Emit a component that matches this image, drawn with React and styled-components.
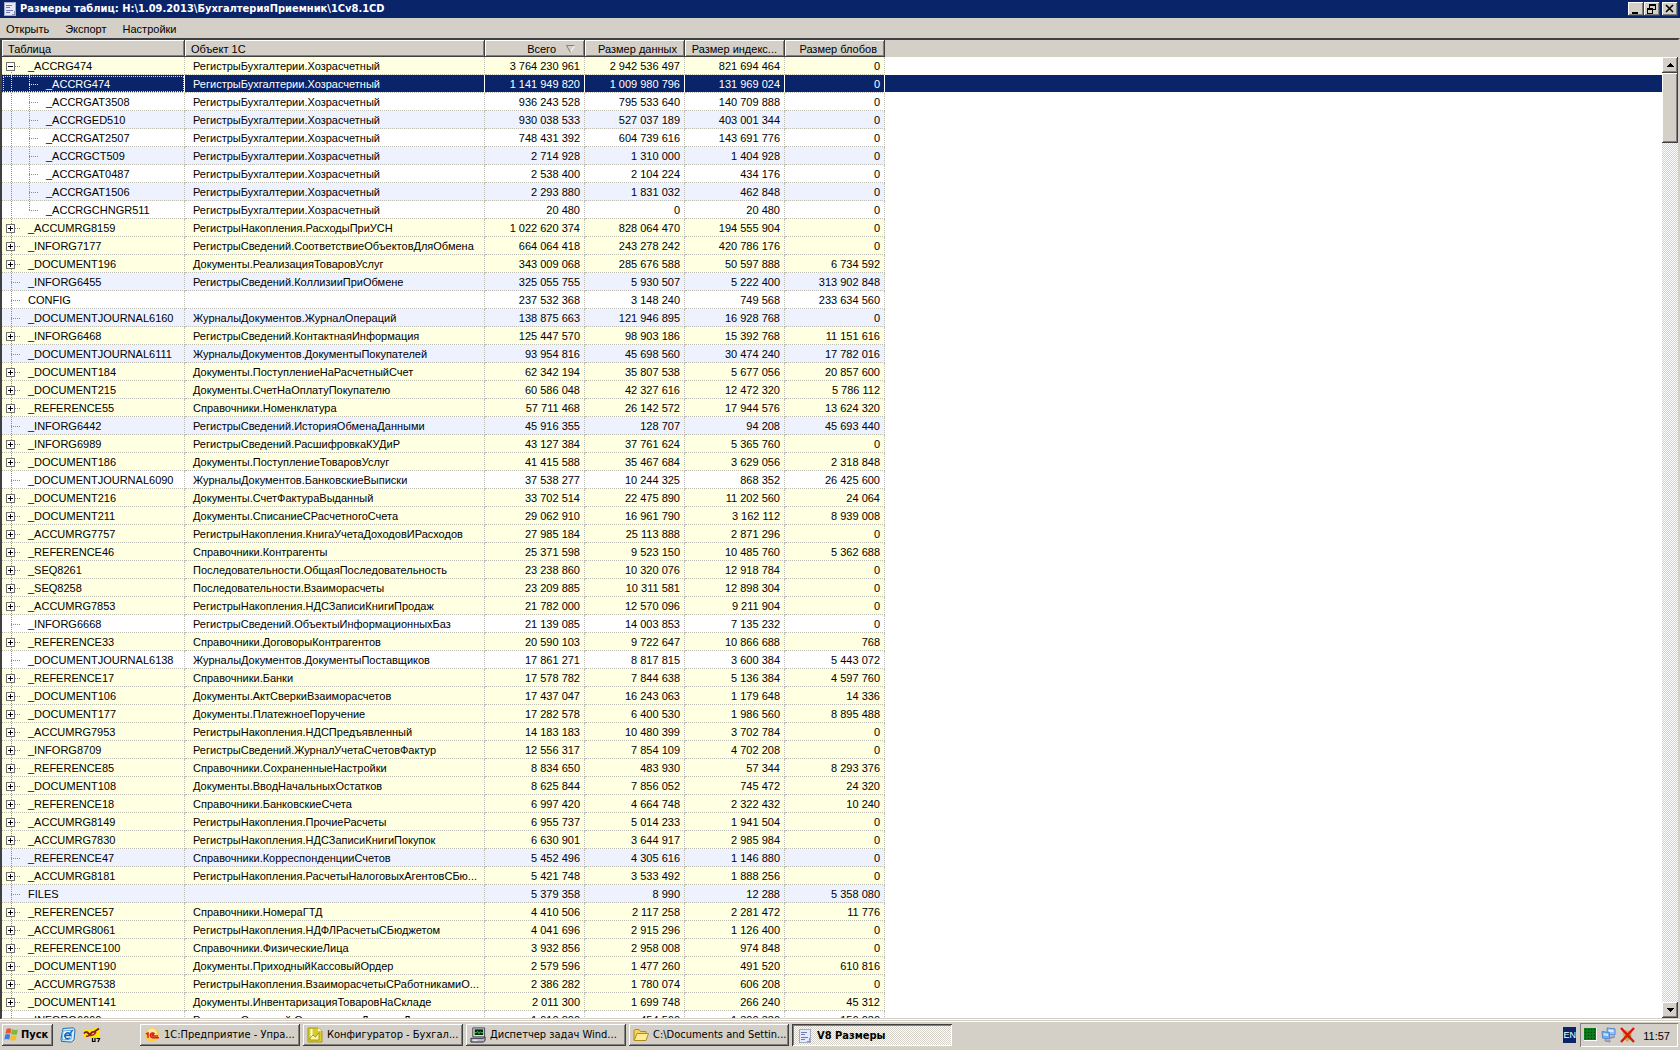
import React, { useState } from "react";
import styled, { createGlobalStyle, css } from "styled-components";

const face = "#d4d0c8";
const shade = "#808080";
const dark = "#404040";
const navy = "#0a246a";
const sans = '"Liberation Sans", Arial, sans-serif';
const tahoma = '"DejaVu Sans Condensed", "DejaVu Sans", sans-serif';

const Global = createGlobalStyle`
  * { box-sizing: border-box; }
  html, body { margin: 0; height: 100%; overflow: hidden; }
  body { background: ${face}; font: 11px/16px ${sans}; color: #000; }
  button { font: inherit; color: inherit; margin: 0; padding: 0; border: 0; background: none; }
  svg { display: block; flex: none; }
`;

const raised = css`
  background: ${face};
  box-shadow: inset -1px -1px ${dark}, inset 1px 1px #fff, inset -2px -2px ${shade};
`;

const dither = css`
  background: conic-gradient(#fff 25%, ${face} 0 50%, #fff 0 75%, ${face} 0) 0 0 / 2px 2px;
`;

const Desktop = styled.div`
  height: 100vh;
  display: flex;
  flex-direction: column;
`;

const Window = styled.main`
  flex: 1;
  min-height: 0;
  display: flex;
  flex-direction: column;
`;

const TitleBar = styled.header`
  display: flex;
  align-items: center;
  height: 18px;
  flex: none;
  padding: 0 2px 0 4px;
  gap: 4px;
  background: ${navy};
  color: #fff;
`;

const Title = styled.h1`
  flex: 1;
  margin: 0;
  font: bold 11px/18px ${tahoma};
  white-space: nowrap;
`;

const Controls = styled.div`
  display: flex;
`;

const ControlButton = styled.button`
  ${raised}
  width: 16px;
  height: 14px;
  margin-left: ${(p) => (p.$apart ? "2px" : "0")};
`;

const MenuBar = styled.nav`
  display: flex;
  flex: none;
  height: 20px;
  gap: 16px;
  padding: 0 6px;
`;

const MenuItem = styled.button`
  line-height: 22px;
`;

const ListFrame = styled.section`
  flex: 1;
  min-height: 0;
  display: flex;
  background: #fff;
  border: 2px solid ${face};
  border-top-color: ${dark};
  border-left-color: ${dark};
`;

const ListView = styled.div`
  flex: 1;
  min-width: 0;
  overflow: hidden;
`;

const Table = styled.table`
  width: 100%;
  table-layout: fixed;
  border-collapse: separate;
  border-spacing: 0;
`;

const Col = styled.col`
  width: ${(p) => p.$w};
`;

const HeadCell = styled.th`
  ${raised}
  height: 17px;
  padding: ${(p) => (p.$num ? "1px 8px 0 6px" : "1px 6px 0")};
  font-weight: normal;
  text-align: ${(p) => (p.$num ? "right" : "left")};
  white-space: nowrap;
  overflow: hidden;
`;

const HeadFill = styled.td`
  background: ${face};
`;

const SortLabel = styled.span`
  display: flex;
  justify-content: flex-end;
  align-items: center;
  gap: 10px;
  padding-right: 2px;
`;

const tones = { y: "#ffffe1", b: "#eef2ff", w: "#fff" };

const Row = styled.tr`
  background: ${(p) => tones[p.$tone]};
`;

const Cell = styled.td`
  height: 18px;
  padding: ${(p) => (p.$num ? "1px 4px 0 0" : p.$tree ? "0" : "1px 0 0 8px")};
  text-align: ${(p) => (p.$num ? "right" : "left")};
  white-space: nowrap;
  overflow: hidden;
  border-bottom: 1px dotted #bdbdb4;
  border-right: 1px dotted #bdbdb4;
  ${(p) =>
    p.$selected &&
    css`
      background: ${navy};
      background-clip: padding-box;
      color: #fff;
      border-right: 1px solid #fff;
      outline: ${p.$tree ? "1px dotted #e0d8b0" : "none"};
      outline-offset: -2px;
    `}
`;

const Filler = styled.td`
  background: ${(p) => (p.$selected ? navy : "#fff")};
  background-clip: padding-box;
  border-bottom: 1px solid #fff;
`;

const TreeItem = styled.div`
  display: flex;
  height: 17px;
`;

const Expander = styled.button`
  width: 18px;
  height: 17px;
`;

const Name = styled.span`
  padding: 1px 0 0 8px;
`;

const ScrollBar = styled.div`
  width: 16px;
  flex: none;
  display: flex;
  flex-direction: column;
  border-top: 17px solid ${face};
`;

const ScrollButton = styled.button`
  ${raised}
  height: 16px;
  display: grid;
  place-items: center;
`;

const ScrollThumb = styled.div`
  ${raised}
  height: 70px;
`;

const ScrollTrack = styled.div`
  ${dither}
  flex: 1;
`;

const TaskBar = styled.footer`
  display: flex;
  flex: none;
  height: 30px;
  padding: 2px 2px 4px;
  align-items: center;
  border-top: 1px solid ${face};
  box-shadow: inset 0 1px #fff, 0 -1px #fff;
  font: 11px/18px ${tahoma};
`;

const StartButton = styled.button`
  ${raised}
  width: 51px;
  height: 22px;
  display: flex;
  align-items: center;
  gap: 2px;
  padding-left: 2px;
  font-weight: bold;
`;

const QuickLaunch = styled.div`
  display: flex;
  gap: 7px;
  width: 87px;
  padding-left: 7px;
`;

const Tasks = styled.div`
  display: flex;
  flex: 1;
  gap: 3px;
`;

const TaskButton = styled.button`
  ${raised}
  width: 160px;
  height: 22px;
  display: flex;
  align-items: center;
  gap: 4px;
  padding: 0 4px;
  white-space: nowrap;
  overflow: hidden;
  ${(p) =>
    p.$active &&
    css`
      ${dither}
      box-shadow: inset 1px 1px ${dark}, inset -1px -1px #fff, inset 2px 2px ${shade};
      font-weight: bold;
      padding: 2px 4px 0 5px;
    `}
`;

const Language = styled.button`
  min-width: 12px;
  height: 16px;
  margin-right: 4px;
  background: ${navy};
  color: #fff;
  font: 9px/16px ${sans};
  text-align: center;
`;

const Tray = styled.div`
  display: flex;
  align-items: center;
  height: 24px;
  width: 98px;
  padding: 0 8px 0 4px;
  gap: 4px;
  box-shadow: inset 1px 1px ${shade}, inset -1px -1px #fff;
`;

const Clock = styled.time`
  margin-left: auto;
  padding-top: 2px;
  font: 11px/16px ${sans};
`;

function Guide({ box, open, branch, end, light }) {
  const stroke = light ? "#e8e8e8" : "#8c8c8c";
  return (
    <svg width="18" height="17" shapeRendering="crispEdges" aria-hidden="true">
      <path d={end ? "M9.5 0V9" : open ? "M9.5 9V17" : "M9.5 0V17"} stroke={stroke} strokeDasharray="1 1" />
      {branch && <path d="M9 9.5H18" stroke={stroke} strokeDasharray="1 1" />}
      {box && (
        <>
          <rect x="4.5" y="5.5" width="8" height="8" fill="#fff" stroke="#707070" />
          <path d={open ? "M6 9H11V10H6Z" : "M6 9H8V7H9V9H11V10H9V12H8V10H6Z"} fill="#000" />
        </>
      )}
    </svg>
  );
}

function DocIcon({ width = 12 }) {
  return (
    <svg width={width} height="14" viewBox="0 0 12 14" shapeRendering="crispEdges" aria-hidden="true">
      <rect x=".5" y=".5" width="11" height="13" fill="#e6e9f8" stroke="#a3a9c9" />
      <path d="M2 3.5H8M2 5.5H6M2 8.5H9M2 10.5H6" stroke="#6f7ab4" />
      <path d="M8 12.5H11M10.5 9V13" stroke="#8d94bd" />
    </svg>
  );
}

function FlagIcon() {
  return (
    <svg width="15" height="15" viewBox="0 0 15 15" aria-hidden="true">
      <path d="M2.5 2Q5 .5 7.3 2L6.4 6.8Q4 5.5 1.5 6.8Z" fill="#e8582a" />
      <path d="M8 2.2Q11 3.5 14 2.4L13 7.2Q10 8.3 7.1 7Z" fill="#7db93b" />
      <path d="M1.3 7.7Q4 6.4 6.2 7.8L5.3 12.6Q3 11.4 .4 12.6Z" fill="#3e7de0" />
      <path d="M7 8Q10 9.2 12.8 8.2L11.8 13Q9 14.2 6.1 12.9Z" fill="#f7bd27" />
    </svg>
  );
}

function MailIcon() {
  return (
    <svg width="16" height="16" viewBox="0 0 16 16" aria-hidden="true">
      <path d="M3 1.5L13.5 .8L15 3L14 13L11.5 15L1.5 14.5L1 12Z" fill="#d8ecfc" stroke="#1c6fb8" />
      <path d="M3 4L11.5 3.3L11 12L2.5 13Z" fill="#fff" stroke="#5aa8de" />
      <path d="M5 8.4H10.6A2.9 2.9 0 1 0 9.8 10.8" fill="none" stroke="#1168b8" strokeWidth="1.6" />
      <path d="M10 6L13 3" stroke="#1168b8" strokeWidth="1.2" />
    </svg>
  );
}

function V7Icon() {
  return (
    <svg width="18" height="16" viewBox="0 0 18 16" aria-hidden="true">
      <path d="M1 3H11V1H16V10H1Z" fill="#ffe800" />
      <path d="M1 6.5Q3 4 4.5 5.5T7 8Q9 4 11 5L16 1.5" fill="none" stroke="#7a1535" strokeWidth="1.8" />
      <path d="M3 8.8Q5 10 7.5 7.5M8 8.5Q11 8.5 13 5" fill="none" stroke="#9c1f3d" strokeWidth="1.4" />
      <path d="M9.5 11V14.5H12V11M13.5 11.5H16.5L15 15" fill="none" stroke="#000" strokeWidth="1.2" />
    </svg>
  );
}

function OneCIcon() {
  return (
    <svg width="16" height="16" viewBox="0 0 16 16" aria-hidden="true">
      <circle cx="8" cy="8" r="7" fill="#ffc94a" />
      <circle cx="8" cy="6.5" r="5" fill="#ffe69a" />
      <path d="M2 7.2L4 6V11M10.5 7A2.4 2.3 0 1 0 8.6 10.7H15M9.5 8.2A.8 .8 0 1 0 8.8 9H14" fill="none" stroke="#d8201c" strokeWidth="1.5" />
    </svg>
  );
}

function ConfigIcon() {
  return (
    <svg width="16" height="16" viewBox="0 0 16 16" aria-hidden="true">
      <path d="M1 1H11L15 4V15H1Z" fill="#d8cc2c" stroke="#a89c18" />
      <path d="M11 1L15 4H11Z" fill="#faf6b8" />
      <path d="M4.5 2V10" fill="none" stroke="#fffce0" strokeWidth="2" />
      <path d="M3 13V11L6 8L8.5 10L12 5.5V13Z" fill="#fff7a5" stroke="#8f8710" strokeWidth=".8" />
    </svg>
  );
}

function MonitorIcon() {
  return (
    <svg width="16" height="16" viewBox="0 0 17 16" aria-hidden="true">
      <path d="M3 .5H15.5V10H3Z" fill="#d9dce4" stroke="#3c404c" />
      <rect x="5" y="2" width="9" height="6" fill="#07240c" />
      <path d="M5 5.5H7L8 4L9.5 6.5L11 4.5L12 5.5H14" fill="none" stroke="#3be04b" />
      <path d="M1 11.5H14L16 10V14L14 15.5H1Z" fill="#b7bac6" stroke="#24262e" />
      <path d="M3 13.5H8" stroke="#fff" />
    </svg>
  );
}

function FolderIcon() {
  return (
    <svg width="16" height="16" viewBox="0 0 16 16" aria-hidden="true">
      <path d="M1 13V4Q1 2.5 2.5 2.5H6L7.5 4.5H13V7" fill="#f5d25c" stroke="#b28a1c" />
      <path d="M1.2 13.5L4 6.5H15.5L13 13.5Z" fill="#ffec94" stroke="#b28a1c" />
    </svg>
  );
}

function GridIcon() {
  return (
    <svg width="13" height="13" shapeRendering="crispEdges" aria-hidden="true">
      <rect width="13" height="13" fill="#fff" />
      <rect width="12" height="12" fill="#0b7a1c" />
      <path d="M1.5 1V11M4.5 1V11M7.5 1V11M10.5 1V11" stroke="#02380a" strokeDasharray="1 2" />
    </svg>
  );
}

function NetworkIcon() {
  return (
    <svg width="15" height="16" viewBox="0 0 15 16" aria-hidden="true">
      <path d="M6 1L14 1.8V8L6.5 7.5Z" fill="#8fc4f8" stroke="#5a86cc" />
      <path d="M7.5 2.6L12.5 3V5L7.8 4.8Z" fill="#d8eeff" />
      <path d="M8 10L14 9V10.5L9 12Z" fill="#8a93b5" />
      <path d="M1 4.5L8.5 5.5V12L1.5 11Z" fill="#6cb0f4" stroke="#5a86cc" />
      <path d="M2.4 6.2L7 6.8V9L2.6 8.4Z" fill="#c8e6ff" />
      <path d="M4 12V14L9 15V13" fill="#a3a7bb" stroke="#8087a5" strokeWidth=".8" />
    </svg>
  );
}

function BlockedIcon() {
  return (
    <svg width="15" height="16" viewBox="0 0 15 16" aria-hidden="true">
      <path d="M2 3L12 4L11 12L7 15L4 11Z" fill="#dca83a" />
      <path d="M6 5L11 9L9 12L6 9Z" fill="#3b8c35" />
      <path d="M1 1L14 15M14 1L1 15" stroke="#dc1414" strokeWidth="2.4" />
    </svg>
  );
}

const REG_ACC = "РегистрыБухгалтерии.Хозрасчетный";

// kind: "open" / "closed" have an expander, "leaf" is a plain root row, "child" / "last" sit under an open row
const rows = [
  ["open", "y", "_ACCRG474", REG_ACC, "3 764 230 961", "2 942 536 497", "821 694 464", "0"],
  ["child", "w", "_ACCRG474", REG_ACC, "1 141 949 820", "1 009 980 796", "131 969 024", "0"],
  ["child", "w", "_ACCRGAT3508", REG_ACC, "936 243 528", "795 533 640", "140 709 888", "0"],
  ["child", "b", "_ACCRGED510", REG_ACC, "930 038 533", "527 037 189", "403 001 344", "0"],
  ["child", "w", "_ACCRGAT2507", REG_ACC, "748 431 392", "604 739 616", "143 691 776", "0"],
  ["child", "b", "_ACCRGCT509", REG_ACC, "2 714 928", "1 310 000", "1 404 928", "0"],
  ["child", "w", "_ACCRGAT0487", REG_ACC, "2 538 400", "2 104 224", "434 176", "0"],
  ["child", "b", "_ACCRGAT1506", REG_ACC, "2 293 880", "1 831 032", "462 848", "0"],
  ["last", "w", "_ACCRGCHNGR511", REG_ACC, "20 480", "0", "20 480", "0"],
  ["closed", "y", "_ACCUMRG8159", "РегистрыНакопления.РасходыПриУСН", "1 022 620 374", "828 064 470", "194 555 904", "0"],
  ["closed", "y", "_INFORG7177", "РегистрыСведений.СоответствиеОбъектовДляОбмена", "664 064 418", "243 278 242", "420 786 176", "0"],
  ["closed", "y", "_DOCUMENT196", "Документы.РеализацияТоваровУслуг", "343 009 068", "285 676 588", "50 597 888", "6 734 592"],
  ["leaf", "b", "_INFORG6455", "РегистрыСведений.КоллизииПриОбмене", "325 055 755", "5 930 507", "5 222 400", "313 902 848"],
  ["leaf", "w", "CONFIG", "", "237 532 368", "3 148 240", "749 568", "233 634 560"],
  ["leaf", "b", "_DOCUMENTJOURNAL6160", "ЖурналыДокументов.ЖурналОпераций", "138 875 663", "121 946 895", "16 928 768", "0"],
  ["closed", "y", "_INFORG6468", "РегистрыСведений.КонтактнаяИнформация", "125 447 570", "98 903 186", "15 392 768", "11 151 616"],
  ["leaf", "b", "_DOCUMENTJOURNAL6111", "ЖурналыДокументов.ДокументыПокупателей", "93 954 816", "45 698 560", "30 474 240", "17 782 016"],
  ["closed", "y", "_DOCUMENT184", "Документы.ПоступлениеНаРасчетныйСчет", "62 342 194", "35 807 538", "5 677 056", "20 857 600"],
  ["closed", "y", "_DOCUMENT215", "Документы.СчетНаОплатуПокупателю", "60 586 048", "42 327 616", "12 472 320", "5 786 112"],
  ["closed", "y", "_REFERENCE55", "Справочники.Номенклатура", "57 711 468", "26 142 572", "17 944 576", "13 624 320"],
  ["leaf", "b", "_INFORG6442", "РегистрыСведений.ИсторияОбменаДанными", "45 916 355", "128 707", "94 208", "45 693 440"],
  ["closed", "y", "_INFORG6989", "РегистрыСведений.РасшифровкаКУДиР", "43 127 384", "37 761 624", "5 365 760", "0"],
  ["closed", "y", "_DOCUMENT186", "Документы.ПоступлениеТоваровУслуг", "41 415 588", "35 467 684", "3 629 056", "2 318 848"],
  ["leaf", "w", "_DOCUMENTJOURNAL6090", "ЖурналыДокументов.БанковскиеВыписки", "37 538 277", "10 244 325", "868 352", "26 425 600"],
  ["closed", "y", "_DOCUMENT216", "Документы.СчетФактураВыданный", "33 702 514", "22 475 890", "11 202 560", "24 064"],
  ["closed", "y", "_DOCUMENT211", "Документы.СписаниеСРасчетногоСчета", "29 062 910", "16 961 790", "3 162 112", "8 939 008"],
  ["closed", "y", "_ACCUMRG7757", "РегистрыНакопления.КнигаУчетаДоходовИРасходов", "27 985 184", "25 113 888", "2 871 296", "0"],
  ["closed", "y", "_REFERENCE46", "Справочники.Контрагенты", "25 371 598", "9 523 150", "10 485 760", "5 362 688"],
  ["closed", "y", "_SEQ8261", "Последовательности.ОбщаяПоследовательность", "23 238 860", "10 320 076", "12 918 784", "0"],
  ["closed", "y", "_SEQ8258", "Последовательности.Взаиморасчеты", "23 209 885", "10 311 581", "12 898 304", "0"],
  ["closed", "y", "_ACCUMRG7853", "РегистрыНакопления.НДСЗаписиКнигиПродаж", "21 782 000", "12 570 096", "9 211 904", "0"],
  ["leaf", "w", "_INFORG6668", "РегистрыСведений.ОбъектыИнформационныхБаз", "21 139 085", "14 003 853", "7 135 232", "0"],
  ["closed", "y", "_REFERENCE33", "Справочники.ДоговорыКонтрагентов", "20 590 103", "9 722 647", "10 866 688", "768"],
  ["leaf", "w", "_DOCUMENTJOURNAL6138", "ЖурналыДокументов.ДокументыПоставщиков", "17 861 271", "8 817 815", "3 600 384", "5 443 072"],
  ["closed", "y", "_REFERENCE17", "Справочники.Банки", "17 578 782", "7 844 638", "5 136 384", "4 597 760"],
  ["closed", "y", "_DOCUMENT106", "Документы.АктСверкиВзаиморасчетов", "17 437 047", "16 243 063", "1 179 648", "14 336"],
  ["closed", "y", "_DOCUMENT177", "Документы.ПлатежноеПоручение", "17 282 578", "6 400 530", "1 986 560", "8 895 488"],
  ["closed", "y", "_ACCUMRG7953", "РегистрыНакопления.НДСПредъявленный", "14 183 183", "10 480 399", "3 702 784", "0"],
  ["closed", "y", "_INFORG8709", "РегистрыСведений.ЖурналУчетаСчетовФактур", "12 556 317", "7 854 109", "4 702 208", "0"],
  ["closed", "y", "_REFERENCE85", "Справочники.СохраненныеНастройки", "8 834 650", "483 930", "57 344", "8 293 376"],
  ["closed", "y", "_DOCUMENT108", "Документы.ВводНачальныхОстатков", "8 625 844", "7 856 052", "745 472", "24 320"],
  ["closed", "y", "_REFERENCE18", "Справочники.БанковскиеСчета", "6 997 420", "4 664 748", "2 322 432", "10 240"],
  ["closed", "y", "_ACCUMRG8149", "РегистрыНакопления.ПрочиеРасчеты", "6 955 737", "5 014 233", "1 941 504", "0"],
  ["closed", "y", "_ACCUMRG7830", "РегистрыНакопления.НДСЗаписиКнигиПокупок", "6 630 901", "3 644 917", "2 985 984", "0"],
  ["leaf", "b", "_REFERENCE47", "Справочники.КорреспонденцииСчетов", "5 452 496", "4 305 616", "1 146 880", "0"],
  ["closed", "y", "_ACCUMRG8181", "РегистрыНакопления.РасчетыНалоговыхАгентовСБю...", "5 421 748", "3 533 492", "1 888 256", "0"],
  ["leaf", "b", "FILES", "", "5 379 358", "8 990", "12 288", "5 358 080"],
  ["closed", "y", "_REFERENCE57", "Справочники.НомераГТД", "4 410 506", "2 117 258", "2 281 472", "11 776"],
  ["closed", "y", "_ACCUMRG8061", "РегистрыНакопления.НДФЛРасчетыСБюджетом", "4 041 696", "2 915 296", "1 126 400", "0"],
  ["closed", "y", "_REFERENCE100", "Справочники.ФизическиеЛица", "3 932 856", "2 958 008", "974 848", "0"],
  ["closed", "y", "_DOCUMENT190", "Документы.ПриходныйКассовыйОрдер", "2 579 596", "1 477 260", "491 520", "610 816"],
  ["closed", "y", "_ACCUMRG7538", "РегистрыНакопления.ВзаиморасчетыСРаботникамиО...", "2 386 282", "1 780 074", "606 208", "0"],
  ["closed", "y", "_DOCUMENT141", "Документы.ИнвентаризацияТоваровНаСкладе", "2 011 300", "1 699 748", "266 240", "45 312"],
  ["leaf", "w", "_INFORG6690", "РегистрыСведений.ОграниченияДоступаДанных", "1 910 800", "454 560", "1 300 330", "156 030"],
];

function DataRow({ row, selected, onSelect }) {
  const [kind, tone, name, object, ...sizes] = row;
  const nested = kind === "child" || kind === "last";
  const expandable = kind === "open" || kind === "closed";
  return (
    <Row $tone={tone} onClick={onSelect} aria-selected={selected}>
      <Cell $tree $selected={selected}>
        <TreeItem>
          {expandable ? (
            <Expander aria-label={name}>
              <Guide box branch open={kind === "open"} />
            </Expander>
          ) : (
            <Guide branch={!nested} light={selected} />
          )}
          {nested && <Guide branch end={kind === "last"} light={selected} />}
          <Name>{name}</Name>
        </TreeItem>
      </Cell>
      <Cell $selected={selected}>{object}</Cell>
      {sizes.map((size, i) => (
        <Cell key={i} $num $selected={selected}>{size}</Cell>
      ))}
      <Filler $selected={selected} />
    </Row>
  );
}

const tasks = [
  [OneCIcon, "1С:Предприятие - Упра..."],
  [ConfigIcon, "Конфигуратор - Бухгал..."],
  [MonitorIcon, "Диспетчер задач Wind..."],
  [FolderIcon, "C:\\Documents and Settin..."],
  [DocIcon, "V8 Размеры"],
];

export default function App() {
  const [selected, setSelected] = useState(1);
  return (
    <Desktop>
      <Global />
      <Window>
        <TitleBar>
          <DocIcon />
          <Title>Размеры таблиц: H:\1.09.2013\БухгалтерияПриемник\1Cv8.1CD</Title>
          <Controls>
            <ControlButton aria-label="Свернуть">
              <svg width="16" height="14" shapeRendering="crispEdges"><path d="M4 11H10" stroke="#000" strokeWidth="2" /></svg>
            </ControlButton>
            <ControlButton aria-label="Восстановить">
              <svg width="16" height="14" shapeRendering="crispEdges">
                <path d="M5 2H12V8H9V12H3V6H5ZM6 4V6H9V7H11V4ZM4 8V11H8V8Z" fillRule="evenodd" />
              </svg>
            </ControlButton>
            <ControlButton $apart aria-label="Закрыть">
              <svg width="16" height="14" stroke="#000" strokeWidth="1.6"><path d="M4 3L11 10M11 3L4 10" /></svg>
            </ControlButton>
          </Controls>
        </TitleBar>
        <MenuBar>
          <MenuItem>Открыть</MenuItem>
          <MenuItem>Экспорт</MenuItem>
          <MenuItem>Настройки</MenuItem>
        </MenuBar>
        <ListFrame>
          <ListView>
            <Table>
              <colgroup>
                <Col $w="183px" />
                <Col $w="300px" />
                <Col $w="100px" />
                <Col $w="100px" />
                <Col $w="100px" />
                <Col $w="100px" />
                <Col $w="auto" />
              </colgroup>
              <thead>
                <tr>
                  <HeadCell>Таблица</HeadCell>
                  <HeadCell>Объект 1С</HeadCell>
                  <HeadCell $num>
                    <SortLabel>
                      Всего
                      <svg width="9" height="8" aria-hidden="true">
                        <path d="M8.5 .5L4.5 7.5" stroke="#fff" fill="none" />
                        <path d="M8.5 .5H.5L4.5 7.5" stroke="#808080" fill="none" />
                      </svg>
                    </SortLabel>
                  </HeadCell>
                  <HeadCell $num>Размер данных</HeadCell>
                  <HeadCell $num>Размер индекс...</HeadCell>
                  <HeadCell $num>Размер блобов</HeadCell>
                  <HeadFill />
                </tr>
              </thead>
              <tbody>
                {rows.map((row, i) => (
                  <DataRow key={i} row={row} selected={i === selected} onSelect={() => setSelected(i)} />
                ))}
              </tbody>
            </Table>
          </ListView>
          <ScrollBar>
            <ScrollButton aria-label="Вверх">
              <svg width="7" height="4" shapeRendering="crispEdges"><path d="M3 0H4V1H5V2H6V3H7V4H0V3H1V2H2V1H3Z" /></svg>
            </ScrollButton>
            <ScrollThumb />
            <ScrollTrack />
            <ScrollButton aria-label="Вниз">
              <svg width="7" height="4" shapeRendering="crispEdges"><path d="M0 0H7V1H6V2H5V3H4V4H3V3H2V2H1V1H0Z" /></svg>
            </ScrollButton>
          </ScrollBar>
        </ListFrame>
      </Window>
      <TaskBar>
        <StartButton>
          <FlagIcon />
          Пуск
        </StartButton>
        <QuickLaunch>
          <MailIcon />
          <V7Icon />
        </QuickLaunch>
        <Tasks>
          {tasks.map(([Icon, label], i) => (
            <TaskButton key={label} $active={i === 4}>
              <Icon width={16} />
              {label}
            </TaskButton>
          ))}
        </Tasks>
        <Language>EN</Language>
        <Tray>
          <GridIcon />
          <NetworkIcon />
          <BlockedIcon />
          <Clock>11:57</Clock>
        </Tray>
      </TaskBar>
    </Desktop>
  );
}
